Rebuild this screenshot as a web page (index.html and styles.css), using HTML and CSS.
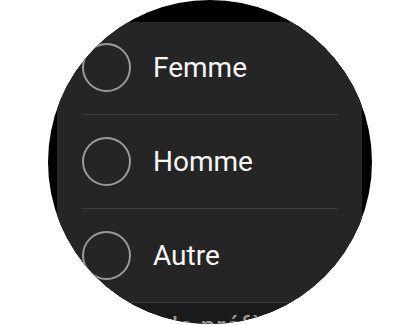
FILE: index.html
```html
<!DOCTYPE html>
<html lang="fr">

<head>
  <meta charset="UTF-8">
  <meta name="viewport" content="width=device-width, initial-scale=1.0">
  <title>Genre</title>
  <link rel="stylesheet" href="styles.css">
</head>

<body>
  <div class="watch">
    <div class="panel">
      <div class="option first">
        <span class="radio"></span>
        <span class="label">Femme</span>
      </div>
      <div class="divider"></div>
      <div class="option">
        <span class="radio"></span>
        <span class="label">Homme</span>
      </div>
      <div class="divider"></div>
      <div class="option">
        <span class="radio"></span>
        <span class="label">Autre</span>
      </div>
    </div>
    <!-- option suivante, coupée par le bord de l'écran -->
    <div class="more">Je préfère ne pas répondre</div>
  </div>
</body>

</html>
```

FILE: styles.css
```css
body {
  margin: 0;
  background-color: #ffffff;
  font-family: Roboto, 'Noto Sans', sans-serif;
  height: 325px;
  overflow: hidden;
}

.watch {
  width: 324px;
  height: 324px;
  margin: 0 auto;
  border-radius: 50%;
  overflow: hidden;
  background-color: #000000;
  padding-top: 22px;
  box-sizing: border-box;
}

.panel {
  margin: 0 10px 0 9px;
  background-color: #252525;
  display: flex;
  flex-direction: column;
  border-bottom: 1px solid #3a3a3a;
}

.option {
  height: 93px;
  display: flex;
  align-items: center;
  padding-left: 25px;
  box-sizing: border-box;
}

.option.first {
  height: 92px;
  padding-bottom: 2px;
}

.radio {
  width: 49px;
  height: 49px;
  border: 2px solid #9a9a9a;
  border-radius: 50%;
  box-sizing: border-box;
  flex-shrink: 0;
}

.label {
  margin-left: 22px;
  font-size: 28px;
  color: #f6f6f6;
}

.divider {
  height: 1px;
  margin: 0 24px 0 25px;
  background-color: #3c3c3c;
}

.more {
  margin: 0 10px 0 9px;
  background-color: #1a1a1a;
  height: 40px;
  padding: 7px 0 0 106px;
  box-sizing: border-box;
  font-size: 28px;
  color: #9a9a9a;
  white-space: nowrap;
}
```
